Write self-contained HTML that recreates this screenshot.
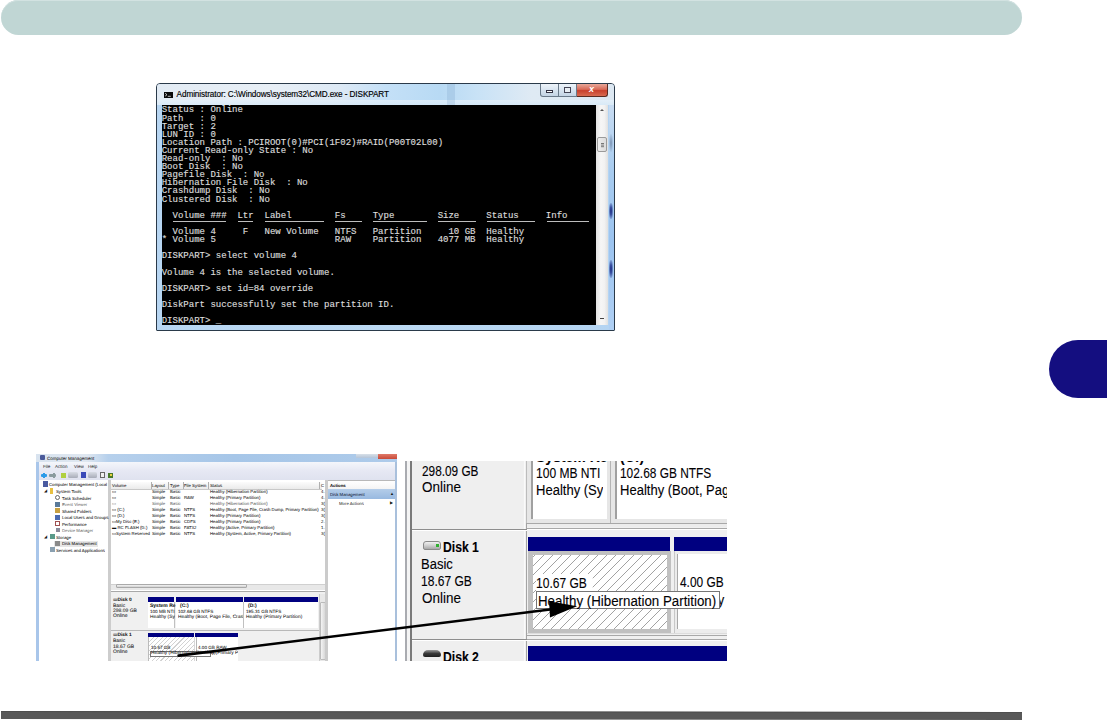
<!DOCTYPE html>
<html><head><meta charset="utf-8">
<style>
html,body{margin:0;padding:0;background:#fff;}
body{width:1107px;height:721px;position:relative;overflow:hidden;font-family:"Liberation Sans",sans-serif;}
.abs{position:absolute;}
#hdr{left:1px;top:0;width:1021px;height:35px;border-radius:17.5px;background:#c0d6d4;box-shadow:inset 0 1px 0 #d2e2e1;}
#tab{left:1049px;top:340px;width:58px;height:58px;border-radius:29px 0 0 29px;background:#140e80;}
#foot{left:1px;top:711px;width:1021px;height:8px;background:#575757;box-shadow:inset 0 1px 0 #4a4a4a, inset 0 -1px 0 #4d4d4d;}

/* CMD window */
#cmd{left:155.5px;top:83px;width:459px;height:248px;border:1px solid #2a3a4a;border-radius:4px 4px 1px 1px;box-sizing:border-box;
 background:linear-gradient(90deg,#b8d6f2 0%,#bcdaf4 50%,#b4d4f2 100%);overflow:hidden;}
#cmd .tb{left:0;top:0;width:457px;height:21px;background:linear-gradient(90deg,#e2ebf4 0%,#e8eff6 25%,#dde9f5 40%,#c4e0f7 50%,#b8daf4 62%,#c8e2f6 70%,#dfeaf4 82%,#dde8f2 100%);}
#cmd .tb2{left:0;top:16px;width:457px;height:5px;background:linear-gradient(#e4f0fa,#d8eaf8);opacity:.8;}
#cmd .vband{left:290px;top:0;width:8px;height:21px;background:rgba(120,160,200,.25);}
#cmd .title{left:20.1px;top:6px;font-size:8.2px;color:#000;-webkit-text-stroke:0.15px #000;white-space:nowrap;letter-spacing:-0.1px;}
#cmd .ico{left:7px;top:7.8px;width:9.3px;height:5.8px;background:#0a0a0a;}
#console{left:5.5px;top:21px;width:434.3px;height:220px;background:#000;}
#console pre{margin:0;position:absolute;left:-0.3px;top:1.4px;font-family:"Liberation Mono",monospace;font-weight:normal;font-size:9.03px;line-height:8.11px;color:#e4e4e4;-webkit-text-stroke:0.15px #bbb;}
#sb{left:439.8px;top:21px;width:12.2px;height:220px;background:linear-gradient(90deg,#e2e2e2,#f6f6f6 40%,#f2f2f2 70%,#e0e0e0);}
#sb .up{left:3.5px;top:4px;width:0;height:0;border-left:2px solid transparent;border-right:2px solid transparent;border-bottom:2.5px solid #555;}
#sb .dn{left:3.5px;top:213px;width:4px;height:1px;background:#444;}
#sb .th{left:0.5px;top:32px;width:10px;height:15px;background:linear-gradient(90deg,#ececec,#dcdcdc);border:1px solid #9a9a9a;border-radius:2px;box-sizing:border-box;}
#sb .th i{position:absolute;left:3px;top:5px;width:3px;height:1px;background:#777;box-shadow:0 1.6px 0 #777,0 3.2px 0 #777;}
#btns{left:383px;top:0;width:70px;height:13px;}
.bmin{left:0;top:0;width:19px;height:12.5px;border:1px solid #6a7a8a;border-top:none;border-radius:0 0 0 3px;box-sizing:border-box;background:linear-gradient(#eef4fa,#d8e4f0 50%,#c4d4e4);}
.bmin i{position:absolute;left:5px;top:6px;width:7px;height:2.5px;border:1px solid #334;box-sizing:border-box;background:#fff;}
.bmax{left:19px;top:0;width:18px;height:12.5px;border:1px solid #6a7a8a;border-top:none;border-left:none;box-sizing:border-box;background:linear-gradient(#eef4fa,#d8e4f0 50%,#c4d4e4);}
.bmax i{position:absolute;left:5px;top:3px;width:7px;height:6px;border:1px solid #445;box-sizing:border-box;background:#e8eef4;}
.bcls{left:37px;top:0;width:31px;height:12.5px;border:1px solid #5a2a20;border-top:none;border-left:none;border-radius:0 0 3px 0;box-sizing:border-box;background:linear-gradient(#e8a89a,#d86a58 45%,#c8402c 55%,#d86a50);}
.bcls i{position:absolute;left:0;top:-1px;width:30px;text-align:center;font-size:9px;font-weight:bold;color:#fff;line-height:12px;}
/* Computer Management */
#cm{left:36px;top:454px;width:361px;height:207px;background:#c8dbef;overflow:hidden;}
/* zoomed disk management */
#dm{left:405px;top:461px;width:322px;height:200px;background:#f0f0f0;overflow:hidden;}

.t{position:absolute;white-space:nowrap;transform-origin:0 0;}
#cm .t{font-size:8.6px;line-height:12px;color:#111;transform:scale(.5);-webkit-text-stroke:0.1px #333;text-rendering:geometricPrecision;}
#cm .title2{left:11px;top:1px;font-size:9px;color:#222;}
#cm .menu{top:9px;font-size:9px;color:#444;}
.blk{position:absolute;}
#dm .t{font-size:14px;line-height:14px;color:#000;-webkit-text-stroke:0.12px #1a1030;}
.hatch2{background-color:#fff;background-image:repeating-linear-gradient(-45deg,#fff 0px,#fff 2.3px,#d2d2d2 2.3px,#d2d2d2 3.1px);}
.hatch{background-color:#fff;background-image:repeating-linear-gradient(-45deg,#fff 0px,#fff 5.4px,#979797 5.4px,#979797 6.36px);}
</style></head>
<body>
<div id="hdr" class="abs"></div>
<div id="tab" class="abs"></div>

<div id="cmd" class="abs">
 <div class="tb abs"></div><div class="tb2 abs"></div><div class="vband abs"></div>
 <div class="ico abs"><svg width="9.3" height="5.8" viewBox="0 0 9.3 5.8" style="position:absolute;left:0;top:0"><path d="M1.2 1.3 L3 2.7 L1.2 4.1" stroke="#ddd" stroke-width="0.9" fill="none"/><path d="M3.8 4.3 H6.8" stroke="#ccc" stroke-width="0.9"/></svg></div>
 <div class="title abs">Administrator: C:\Windows\system32\CMD.exe - DISKPART</div>
 <div id="btns" class="abs"><div class="bmin abs"><i></i></div><div class="bmax abs"><i></i></div><div class="bcls abs"><i>x</i></div></div>
 <div id="console" class="abs"><pre>Status : Online
Path   : 0
Target : 2
LUN ID : 0
Location Path : PCIROOT(0)#PCI(1F02)#RAID(P00T02L00)
Current Read-only State : No
Read-only  : No
Boot Disk  : No
Pagefile Disk  : No
Hibernation File Disk  : No
Crashdump Disk  : No
Clustered Disk  : No

  Volume ###  Ltr  Label        Fs     Type        Size     Status     Info

  Volume 4     F   New Volume   NTFS   Partition     10 GB  Healthy
* Volume 5                      RAW    Partition   4077 MB  Healthy

DISKPART&gt; select volume 4

Volume 4 is the selected volume.

DISKPART&gt; set id=84 override

DiskPart successfully set the partition ID.

DISKPART&gt; _</pre><div class="abs" style="left:10.74px;top:116.3px;width:53.60px;height:1px;background:#bdbdbd;"></div><div class="abs" style="left:75.78px;top:116.3px;width:15.66px;height:1px;background:#bdbdbd;"></div><div class="abs" style="left:102.88px;top:116.3px;width:59.02px;height:1px;background:#bdbdbd;"></div><div class="abs" style="left:173.34px;top:116.3px;width:26.50px;height:1px;background:#bdbdbd;"></div><div class="abs" style="left:211.28px;top:116.3px;width:53.60px;height:1px;background:#bdbdbd;"></div><div class="abs" style="left:276.32px;top:116.3px;width:37.34px;height:1px;background:#bdbdbd;"></div><div class="abs" style="left:325.10px;top:116.3px;width:48.18px;height:1px;background:#bdbdbd;"></div><div class="abs" style="left:384.72px;top:116.3px;width:42.76px;height:1px;background:#bdbdbd;"></div></div>
 <div class="abs" style="left:452px;top:21px;width:5px;height:226px;background:linear-gradient(#c8dcf2,#a8ccf0 30%,#9cc4f0 60%,#b0d0f4);"></div>
 <div class="abs" style="left:452.5px;top:50px;width:4px;height:18px;border-radius:2px;background:radial-gradient(ellipse at center,#7890b0 0%,rgba(160,190,230,0) 80%);"></div>
 <div class="abs" style="left:452.5px;top:119px;width:4px;height:16px;border-radius:2px;background:radial-gradient(ellipse at center,#1a2a80 0%,#3a50a0 35%,rgba(160,190,230,0) 85%);"></div>
 <div class="abs" style="left:452.5px;top:176px;width:4px;height:18px;border-radius:2px;background:radial-gradient(ellipse at center,#1a2a80 0%,#3a50a0 35%,rgba(160,190,230,0) 85%);"></div>
 <div id="sb" class="abs"><div class="up abs"></div><div class="th abs"><i></i></div><div class="dn abs"></div></div>
</div>

<div id="cm" class="abs">
 <!-- title bar -->
 <div class="blk" style="left:0;top:0;width:361px;height:8px;background:linear-gradient(90deg,#d8e3ef 0%,#dfe7f0 14%,#b6d0ec 20%,#a6c6e8 55%,#aecbea 100%);"></div>
 <div class="blk" style="left:3.5px;top:1px;width:5px;height:5px;background:#4a5a9a;border-radius:1px;"></div>
 <div class="t title2" style="left:11px;top:1px;">Computer Management</div>
 <div class="blk" style="left:320px;top:0;width:22px;height:4px;background:linear-gradient(#d8e0e8,#b4c4d8);"></div>
 <div class="blk" style="left:342px;top:0;width:19px;height:4.5px;background:linear-gradient(#e07a6a,#c84a38);"></div>
 <!-- menu + toolbar -->
 <div class="blk" style="left:3px;top:8px;width:356px;height:18px;background:linear-gradient(#f4f6fb,#e6e8f3 50%,#dfe2ef);"></div>
 <div class="t menu" style="left:7px;">File</div>
 <div class="t menu" style="left:19px;">Action</div>
 <div class="t menu" style="left:37.5px;">View</div>
 <div class="t menu" style="left:52px;">Help</div>
 <div class="blk" style="left:5.3px;top:20px;width:6px;height:2.6px;background:#2a9ae8;border-radius:1px;"></div>
 <div class="blk" style="left:6.5px;top:19px;width:2px;height:4.6px;background:#2a9ae8;"></div>
 <div class="blk" style="left:13.4px;top:20px;width:6.3px;height:2.6px;background:#8a9a9e;border-radius:1px;"></div>
 <div class="blk" style="left:17px;top:19px;width:2px;height:4.6px;background:#8a9a9e;"></div>
 <div class="blk" style="left:25.2px;top:18.6px;width:4.5px;height:5.8px;background:#b0d040;"></div>
 <div class="blk" style="left:31.5px;top:18px;width:10px;height:6.4px;background:linear-gradient(#d8dce4,#a8acb8);border-radius:1.5px;"></div>
 <div class="blk" style="left:44.6px;top:18.4px;width:5px;height:5.8px;background:#3a4ab8;"></div>
 <div class="blk" style="left:51.8px;top:18px;width:9.5px;height:6.4px;background:linear-gradient(#d8dce4,#a8acb8);border-radius:1.5px;"></div>
 <div class="blk" style="left:64px;top:18.2px;width:4.6px;height:6px;background:#f0f0f0;border:0.7px solid #666;box-sizing:border-box;"></div>
 <div class="blk" style="left:72.2px;top:18.6px;width:5.2px;height:5.8px;background:radial-gradient(circle at 60% 35%,#e8d040 0 25%,#4a7a2a 30%);"></div>
 <!-- left frame -->
 <div class="blk" style="left:0;top:8px;width:3px;height:199px;background:#a9c6ea;"></div>
 <div class="blk" style="left:359px;top:8px;width:2px;height:199px;background:#a9c0dc;"></div>
 <!-- tree pane -->
 <div class="blk" style="left:3px;top:26px;width:69px;height:181px;background:#fff;"></div>
 <div class="blk" style="left:71.5px;top:26px;width:3px;height:181px;background:#cdcdcd;"></div>
 <div class="blk" style="left:7px;top:27px;width:5px;height:6px;background:#4a5aa0;"></div>
 <div class="t" style="left:13px;top:27.3px;">Computer Management (Local</div>
 <div class="t" style="left:8px;top:34px;font-size:8px;">&#9698;</div>
 <div class="blk" style="left:14px;top:34px;width:3px;height:6px;background:#e8c040;"></div>
 <div class="t" style="left:20px;top:34px;">System Tools</div>
 <div class="blk" style="left:19px;top:41px;width:5px;height:5px;border:0.7px solid #666;border-radius:50%;box-sizing:border-box;"></div>
 <div class="t" style="left:26px;top:40.8px;">Task Scheduler</div>
 <div class="blk" style="left:19px;top:47.5px;width:5px;height:5px;background:#5a7a9a;"></div>
 <div class="t" style="left:26px;top:47.3px;color:#888;">Event Viewer</div>
 <div class="blk" style="left:19px;top:54px;width:5px;height:5px;background:#c8a040;"></div>
 <div class="t" style="left:26px;top:53.5px;">Shared Folders</div>
 <div class="blk" style="left:19px;top:60.5px;width:5px;height:5px;background:#4a6ab0;"></div>
 <div class="t" style="left:26px;top:60.3px;">Local Users and Groups</div>
 <div class="blk" style="left:19px;top:67px;width:5px;height:5px;border:0.7px solid #a05050;box-sizing:border-box;"></div>
 <div class="t" style="left:26px;top:67px;">Performance</div>
 <div class="blk" style="left:20px;top:74px;width:4px;height:4px;background:#8a8a9a;"></div>
 <div class="t" style="left:26px;top:73.3px;color:#888;">Device Manager</div>
 <div class="t" style="left:8px;top:80px;font-size:8px;">&#9698;</div>
 <div class="blk" style="left:14px;top:80px;width:5px;height:5px;background:#5a9a8a;"></div>
 <div class="t" style="left:20px;top:79.7px;">Storage</div>
 <div class="blk" style="left:18px;top:87px;width:44px;height:5.5px;background:#e6e6e6;"></div>
 <div class="blk" style="left:19px;top:86.5px;width:5px;height:5px;background:#8a8a8a;"></div>
 <div class="t" style="left:26px;top:86.3px;">Disk Management</div>
 <div class="blk" style="left:14px;top:93px;width:5px;height:5px;background:#8aa0b0;"></div>
 <div class="t" style="left:20px;top:92.8px;">Services and Applications</div>
 <!-- list pane -->
 <div class="blk" style="left:74.5px;top:26px;width:214.5px;height:181px;background:#fff;"></div>
 <div class="blk" style="left:74.5px;top:27.5px;width:211px;height:7px;background:linear-gradient(#fcfcfc,#eaeaea);border-bottom:1px solid #c8c8c8;"></div>
 <div class="blk" style="left:114.5px;top:27.5px;width:1px;height:7px;background:#b0b0b0;"></div>
 <div class="blk" style="left:132px;top:27.5px;width:1px;height:7px;background:#b0b0b0;"></div>
 <div class="blk" style="left:146.5px;top:27.5px;width:1px;height:7px;background:#b0b0b0;"></div>
 <div class="blk" style="left:172px;top:27.5px;width:1px;height:7px;background:#b0b0b0;"></div>
 <div class="blk" style="left:283px;top:27.5px;width:1px;height:7px;background:#b0b0b0;"></div>
 <div class="t" style="left:76px;top:28.3px;">Volume</div>
 <div class="t" style="left:116px;top:28.3px;">Layout</div>
 <div class="t" style="left:133.5px;top:28.3px;">Type</div>
 <div class="t" style="left:148px;top:28.3px;">File System</div>
 <div class="t" style="left:173.5px;top:28.3px;">Status</div>
 <div class="t" style="left:284.5px;top:28.3px;">C</div>
 <div style="position:absolute;left:76px;top:33.7px;">
  <div class="t" style="left:0;top:0;">&#9645;</div><div class="t" style="left:39.5px;top:0;">Simple</div><div class="t" style="left:57.5px;top:0;">Basic</div><div class="t" style="left:97.5px;top:0;">Healthy (Hibernation Partition)</div><div class="t" style="left:208.5px;top:0;">4.</div>
  <div class="t" style="left:0;top:6.1px;">&#9645;</div><div class="t" style="left:39.5px;top:6.1px;">Simple</div><div class="t" style="left:57.5px;top:6.1px;">Basic</div><div class="t" style="left:72px;top:6.1px;">RAW</div><div class="t" style="left:97.5px;top:6.1px;">Healthy (Primary Partition)</div><div class="t" style="left:208.5px;top:6.1px;">4.</div>
  <div class="t" style="left:0;top:12.2px;color:#999">&#9645;</div><div class="t" style="left:39.5px;top:12.2px;color:#777">Simple</div><div class="t" style="left:57.5px;top:12.2px;color:#777">Basic</div><div class="t" style="left:97.5px;top:12.2px;color:#777">Healthy (Hibernation Partition)</div><div class="t" style="left:208.5px;top:12.2px;">3(</div>
  <div class="t" style="left:0;top:18.3px;">&#9645; (C:)</div><div class="t" style="left:39.5px;top:18.3px;">Simple</div><div class="t" style="left:57.5px;top:18.3px;">Basic</div><div class="t" style="left:72px;top:18.3px;">NTFS</div><div class="t" style="left:97.5px;top:18.3px;">Healthy (Boot, Page File, Crash Dump, Primary Partition)</div><div class="t" style="left:208.5px;top:18.3px;">3(</div>
  <div class="t" style="left:0;top:24.4px;">&#9645; (D:)</div><div class="t" style="left:39.5px;top:24.4px;">Simple</div><div class="t" style="left:57.5px;top:24.4px;">Basic</div><div class="t" style="left:72px;top:24.4px;">NTFS</div><div class="t" style="left:97.5px;top:24.4px;">Healthy (Primary Partition)</div><div class="t" style="left:208.5px;top:24.4px;">3(</div>
  <div class="t" style="left:0;top:30.5px;">&#9645;My Disc (E:)</div><div class="t" style="left:39.5px;top:30.5px;">Simple</div><div class="t" style="left:57.5px;top:30.5px;">Basic</div><div class="t" style="left:72px;top:30.5px;">CDFS</div><div class="t" style="left:97.5px;top:30.5px;">Healthy (Primary Partition)</div><div class="t" style="left:208.5px;top:30.5px;">2.</div>
  <div class="t" style="left:0;top:36.6px;">&#9644; RC FLASH (G:)</div><div class="t" style="left:39.5px;top:36.6px;">Simple</div><div class="t" style="left:57.5px;top:36.6px;">Basic</div><div class="t" style="left:72px;top:36.6px;">FAT32</div><div class="t" style="left:97.5px;top:36.6px;">Healthy (Active, Primary Partition)</div><div class="t" style="left:208.5px;top:36.6px;">1.</div>
  <div class="t" style="left:0;top:42.7px;">&#9645;System Reserved</div><div class="t" style="left:39.5px;top:42.7px;">Simple</div><div class="t" style="left:57.5px;top:42.7px;">Basic</div><div class="t" style="left:72px;top:42.7px;">NTFS</div><div class="t" style="left:97.5px;top:42.7px;">Healthy (System, Active, Primary Partition)</div><div class="t" style="left:208.5px;top:42.7px;">3(</div>
 </div>
 <!-- h scrollbar -->
 <div class="blk" style="left:74.5px;top:129.5px;width:214px;height:5px;background:#e8e8e8;border-top:0.5px solid #d0d0d0;"></div>
 <div class="blk" style="left:80px;top:130px;width:131px;height:3.8px;background:linear-gradient(#f4f4f4,#d0d0d0);border-radius:1px;border:0.5px solid #aaa;box-sizing:border-box;"></div>
 <div class="blk" style="left:74.5px;top:137.3px;width:214.5px;height:1px;background:#a8a8a8;"></div>
 <!-- disk map -->
 <div class="blk" style="left:74.5px;top:138.3px;width:214.5px;height:68.7px;background:#f0f0f0;"></div>
 <div class="blk" style="left:74.5px;top:176px;width:210px;height:0.8px;background:#b8b8b8;"></div>
 <div class="t" style="left:77px;top:142.8px;font-size:9.6px;color:#555">&#9645;<b style="color:#111">Disk 0</b></div>
 <div class="t" style="left:77px;top:148.6px;font-size:10px;">Basic</div>
 <div class="t" style="left:77px;top:153.6px;font-size:10px;">298.09 GB</div>
 <div class="t" style="left:77px;top:158.9px;font-size:10px;">Online</div>
 <div class="blk" style="left:112px;top:143px;width:26px;height:4.6px;background:#000080;"></div>
 <div class="blk" style="left:139.5px;top:143px;width:67.5px;height:4.6px;background:#000080;"></div>
 <div class="blk" style="left:207.5px;top:143px;width:74.5px;height:4.6px;background:#000080;"></div>
 <div class="blk" style="left:112px;top:147.6px;width:26px;height:26.7px;background:#fff;border-right:0.6px solid #c0c0c0;"></div>
 <div class="blk" style="left:139.5px;top:147.6px;width:67.5px;height:26.7px;background:#fff;border-right:0.6px solid #c0c0c0;"></div>
 <div class="blk" style="left:207.5px;top:147.6px;width:74.5px;height:26.7px;background:#fff;"></div>
 <div class="t" style="left:114.4px;top:149.4px;font-size:10px;font-weight:bold;color:#111;">System Re</div>
 <div class="t" style="left:114.4px;top:154.3px;font-size:9.2px;">100 MB NTI</div>
 <div class="t" style="left:114.4px;top:160px;font-size:9.6px;">Healthy (Sy</div>
 <div class="t" style="left:143.5px;top:149.4px;font-size:10px;font-weight:bold;color:#111;">(C:)</div>
 <div class="t" style="left:142px;top:154.3px;font-size:9.2px;">102.68 GB NTFS</div>
 <div class="blk" style="left:142px;top:150px;width:64.5px;height:20px;overflow:hidden;"><div class="t" style="left:0;top:10px;font-size:9.6px;">Healthy (Boot, Page File, Crash D</div></div>
 <div class="t" style="left:211.5px;top:149.4px;font-size:10px;font-weight:bold;color:#111;">(D:)</div>
 <div class="t" style="left:210px;top:154.3px;font-size:9.2px;">195.31 GB NTFS</div>
 <div class="t" style="left:210px;top:160px;font-size:9.6px;">Healthy (Primary Partition)</div>
 <div class="t" style="left:77px;top:178.4px;font-size:9.6px;color:#555">&#9645;<b style="color:#111">Disk 1</b></div>
 <div class="t" style="left:77px;top:184px;font-size:10px;">Basic</div>
 <div class="t" style="left:77px;top:189.7px;font-size:10px;">18.67 GB</div>
 <div class="t" style="left:77px;top:195.1px;font-size:10px;">Online</div>
 <div class="blk" style="left:112px;top:179px;width:46px;height:4.2px;background:#000080;"></div>
 <div class="blk" style="left:158.6px;top:179px;width:43.4px;height:4.2px;background:#000080;"></div>
 <div class="blk hatch2" style="left:112px;top:183.2px;width:45.5px;height:24px;border-left:0.6px solid #bbb;"></div>
 <div class="blk" style="left:158.2px;top:183.2px;width:43.8px;height:24px;background:#fff;border-left:1.6px solid #d8d8d8;box-sizing:border-box;"></div><div class="blk" style="left:159.6px;top:183.2px;width:0.7px;height:24px;background:#b8b8b8;"></div>
 <div class="t" style="left:114.5px;top:190px;font-size:9.2px;">10.67 GB</div>
 <div class="blk" style="left:159px;top:185px;width:42.5px;height:20px;overflow:hidden;"><div class="t" style="left:2.6px;top:5px;font-size:9.2px;">4.00 GB RAW</div></div>
 <div class="blk" style="left:159px;top:185px;width:42.5px;height:20px;overflow:hidden;"><div class="t" style="left:2.6px;top:11.4px;font-size:9.6px;">Healthy (Primary P</div></div>
 <div class="blk" style="left:114px;top:197.1px;width:61px;height:5.5px;background:#fff;border:0.5px solid #777;box-sizing:border-box;"></div>
 <div class="t" style="left:115px;top:196.4px;font-size:9.6px;">Healthy (Hibernation Partition)</div>
 <div class="blk" style="left:283px;top:140px;width:5px;height:67px;background:#e8e8e8;border-left:0.5px solid #ccc;"></div>
 <div class="blk" style="left:283.5px;top:148px;width:4px;height:56px;background:linear-gradient(90deg,#f4f4f4,#d8d8d8);border:0.5px solid #bbb;border-radius:1px;"></div>
 <!-- action pane -->
 <div class="blk" style="left:289px;top:26px;width:3px;height:181px;background:#cbcbcb;"></div>
 <div class="blk" style="left:292px;top:26px;width:67px;height:181px;background:#fff;"></div>
 <div class="blk" style="left:292px;top:26px;width:67px;height:8.5px;background:linear-gradient(#fff,#f4f4f4);border-top:1px solid #b8b8b8;box-sizing:border-box;"></div>
 <div class="t" style="left:294px;top:28.2px;font-weight:bold;color:#111;">Actions</div>
 <div class="blk" style="left:292px;top:34.7px;width:67px;height:9.9px;background:linear-gradient(#b4cde9,#98b9e0);"></div>
 <div class="t" style="left:294px;top:36.7px;color:#1a2a4a;">Disk Management</div>
 <div class="t" style="left:354px;top:36.5px;font-size:8px;color:#111;">&#9650;</div>
 <div class="t" style="left:303px;top:46px;color:#444;">More Actions</div>
 <div class="t" style="left:354px;top:46px;font-size:8px;color:#111;">&#9654;</div>
</div>
<div id="dm" class="abs">
 <div class="blk" style="left:0;top:0;width:2px;height:200px;background:#a9abb0;"></div>
 <div class="blk" style="left:2px;top:0;width:3px;height:200px;background:#f4f4f4;"></div>
 <div class="blk" style="left:5px;top:0;width:2px;height:200px;background:#7a7a7a;"></div>
 <div class="blk" style="left:7px;top:0;width:111px;height:200px;background:#efefef;"></div>
 <div class="blk" style="left:118.7px;top:0;width:1.3px;height:200px;background:#fafafa;"></div>
 <div class="blk" style="left:120.6px;top:0;width:1.6px;height:200px;background:#a4a4a4;"></div>
 <div class="blk" style="left:122.2px;top:0;width:200px;height:200px;background:#f0f0f0;"></div>
 <!-- label separators -->
 <div class="blk" style="left:7px;top:67.7px;width:115px;height:1.4px;background:#8e8e8e;"></div>
 <div class="blk" style="left:7px;top:69.1px;width:115px;height:1px;background:#fff;"></div>
 <div class="blk" style="left:7px;top:177.6px;width:115px;height:1.4px;background:#8e8e8e;"></div>
 <div class="blk" style="left:7px;top:179px;width:115px;height:1px;background:#fff;"></div>
 <!-- disk0 partitions -->
 <div class="blk" style="left:121px;top:0;width:85px;height:61.6px;background:#e6e6e6;border-left:1.5px solid #bcbcbc;border-right:1.6px solid #b4b4b4;box-sizing:border-box;"></div>
 <div class="blk" style="left:126.4px;top:0;width:75.6px;height:57.7px;background:#fff;border-left:1.4px solid #a0a0a0;box-sizing:border-box;"></div>
 <div class="blk" style="left:206px;top:0;width:116px;height:61.6px;background:#e6e6e6;"></div>
 <div class="blk" style="left:210.4px;top:0;width:112px;height:57.7px;background:#fff;border-left:1.4px solid #a0a0a0;box-sizing:border-box;"></div>
 <div class="blk" style="left:122px;top:61.6px;width:200px;height:1.6px;background:#a8a8a8;"></div>
 <div class="blk" style="left:122px;top:63.2px;width:200px;height:3.3px;background:#ececec;"></div>
 <div class="blk" style="left:122px;top:66.5px;width:200px;height:1.5px;background:#a8a8a8;"></div>
 <div class="blk" style="left:122px;top:68px;width:200px;height:1px;background:#fff;"></div>
 <div class="t" style="left:131px;top:-11.2px;font-weight:bold;">System Re</div>
 <div class="t" style="left:215px;top:-11.2px;font-weight:bold;">(C:)</div>
 
 
 <div class="blk" style="left:126.4px;top:0;width:1.4px;height:57.7px;background:#a0a0a0;"></div>
 <div class="blk" style="left:210.4px;top:0;width:1.4px;height:57.7px;background:#a0a0a0;"></div>
 <div style="position:absolute;left:130px;top:0;width:68px;height:58px;overflow:hidden;">
  <div class="t" style="left:1px;top:4.95px;transform:scaleX(.86);">100 MB NTI</div>
  <div class="t" style="left:1px;top:21.95px;transform:scaleX(.93);">Healthy (System Reserved)</div>
 </div>
 <div style="position:absolute;left:213px;top:0;width:109px;height:58px;overflow:hidden;">
  <div class="t" style="left:1.6px;top:4.95px;transform:scaleX(.85);">102.68 GB NTFS</div>
  <div class="t" style="left:1.6px;top:21.95px;transform:scaleX(.93);">Healthy (Boot, Page File</div>
 </div>
 <!-- disk1 label -->
 <div class="blk" style="left:18px;top:79.5px;width:18px;height:9.7px;border-radius:3px 3px 2px 2px;background:linear-gradient(#f0f0f0,#c8c8c8 60%,#a8a8a8);border:1px solid #8a8a8a;box-sizing:border-box;"></div>
 <div class="blk" style="left:31px;top:83px;width:3px;height:3px;background:#30b030;"></div>
 <div class="t" style="left:37.9px;top:78.95px;font-weight:bold;transform:scaleX(.87);">Disk 1</div>
 <div class="t" style="left:16.4px;top:96.15px;transform:scaleX(.93);">Basic</div>
 <div class="t" style="left:16.3px;top:112.65px;transform:scaleX(.86);">18.67 GB</div>
 <div class="t" style="left:16.7px;top:129.55px;transform:scaleX(.96);">Online</div>
 <!-- disk0 label text -->
 <div class="t" style="left:17px;top:3.15px;transform:scaleX(.843);">298.09 GB</div>
 <div class="t" style="left:17px;top:18.85px;transform:scaleX(.96);">Online</div>
 <!-- disk1 partitions -->
 <div class="blk" style="left:123.3px;top:75.7px;width:141.9px;height:14.1px;background:#000080;"></div>
 <div class="blk" style="left:268.5px;top:75.7px;width:54px;height:14.1px;background:#000080;"></div>
 <div class="blk" style="left:123.3px;top:89.8px;width:142.7px;height:82px;background:#c0c0c0;"></div>
 <svg class="blk" style="left:127.6px;top:93.9px;" width="134.5" height="74" shape-rendering="crispEdges"><defs><pattern id="hp" x="2" y="0" width="9" height="9" patternUnits="userSpaceOnUse"><rect width="9" height="9" fill="#fff"/><g fill="#a2a2a2"><rect x="0" y="8" width="1" height="1"/><rect x="1" y="7" width="1" height="1"/><rect x="2" y="6" width="1" height="1"/><rect x="3" y="5" width="1" height="1"/><rect x="4" y="4" width="1" height="1"/><rect x="5" y="3" width="1" height="1"/><rect x="6" y="2" width="1" height="1"/><rect x="7" y="1" width="1" height="1"/><rect x="8" y="0" width="1" height="1"/></g></pattern></defs><rect width="135" height="74" fill="url(#hp)"/></svg>
 <div class="blk" style="left:268.5px;top:89.8px;width:54px;height:82px;background:#ececec;border-left:1px solid #c8c8c8;box-sizing:border-box;"></div>
 <div class="blk" style="left:272.4px;top:93.1px;width:50px;height:74.7px;background:#fff;border-left:1.3px solid #a8a8a8;box-sizing:border-box;"></div>
 <div class="blk" style="left:122px;top:171.8px;width:200px;height:1.5px;background:#dcdcdc;"></div>
 <div class="blk" style="left:122px;top:173.6px;width:200px;height:1.3px;background:#a8a8a8;"></div>
 <div class="blk" style="left:122px;top:177.5px;width:200px;height:1.5px;background:#a8a8a8;"></div>
 <div class="blk" style="left:122px;top:179px;width:200px;height:1px;background:#fff;"></div>
 <div class="t" style="left:131px;top:112.75px;line-height:18px;padding-right:7px;transform:scaleX(.86);background:#fff;">10.67 GB</div>
 <div class="t" style="left:275.3px;top:114.25px;transform:scaleX(.85);">4.00 GB</div>
 <div class="t" style="left:275.3px;top:131.75px;transform:scaleX(.93);">Healthy (Primary</div>
 <div class="blk" style="left:131px;top:130.4px;width:183.5px;height:18px;background:#fff;border:1px solid #767676;box-sizing:border-box;"></div>
 <div class="t" style="left:133px;top:132.5px;transform:scaleX(.95);">Healthy (Hibernation Partition)</div>
 <!-- disk2 -->
 <div class="blk" style="left:18px;top:188.5px;width:18px;height:7px;border-radius:5px 5px 2px 2px;background:linear-gradient(#9a9a9a,#3a3a3a 50%,#202020);"></div>
 <div class="t" style="left:38px;top:189.35px;font-weight:bold;transform:scaleX(.87);">Disk 2</div>
 <div class="blk" style="left:123.3px;top:185.3px;width:199px;height:15px;background:#000080;"></div>
</div>

<svg class="abs" style="left:0;top:0;" width="1107" height="721" viewBox="0 0 1107 721">
 <line x1="178.6" y1="655.6" x2="552" y2="609.3" stroke="#000" stroke-width="2.6" stroke-linecap="round"/>
 <polygon points="577.1,606.2 549.1,601.2 550,617.5" fill="#000"/>
</svg>
<svg class="abs" style="left:0;top:0;" width="1107" height="721" viewBox="0 0 1107 721">
 <polygon points="1,711.1 1022,712.1 1022,720 1,719" fill="#585858"/>
 <polygon points="1,711.1 1022,712.1 1022,713 1,712" fill="#4e4e4e"/>
</svg>
</body></html>
